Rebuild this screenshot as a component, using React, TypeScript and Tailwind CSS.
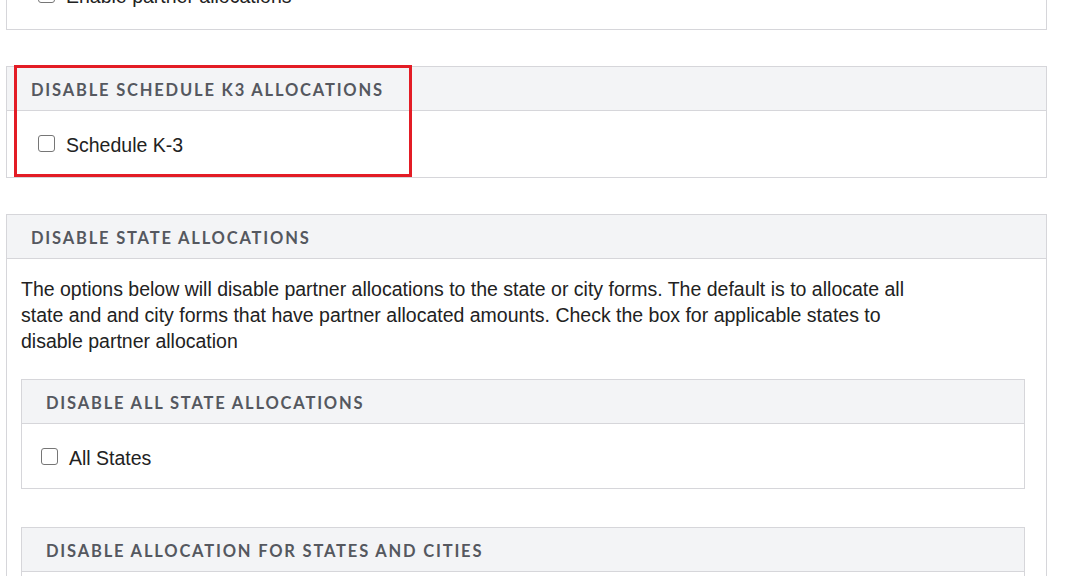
import React from 'react';

const Check: React.FC<{ label: string }> = ({ label }) => (
  <label className="flex items-start gap-[11px] text-[19.5px] leading-[26px] text-[#222]">
    <span className="mt-[3px] w-[17px] h-[17px] rounded-[3px] border border-[#767676] bg-white shrink-0" />
    {label}
  </label>
);

const Card: React.FC<{ title: string; children: React.ReactNode; className?: string }> = ({ title, children, className }) => (
  <div className={`border border-[#d6d6da] bg-white ${className ?? ''}`}>
    <div className="h-[44px] bg-[#f3f4f6] border-b border-[#d6d6da] flex items-center px-6 pt-[3px]">
      <h3 className="font-['Lato',sans-serif] font-bold text-[16.5px] tracking-[0.11em] text-[#55585f] uppercase">{title}</h3>
    </div>
    {children}
  </div>
);

export default function App() {
  return (
    <div className="w-[1072px] h-[576px] overflow-hidden bg-white font-['Liberation_Sans',Arial,sans-serif]">
      <div className="-mt-[82px] ml-[6px] w-[1041px] flex flex-col gap-[36px]">
        {/* Partner allocations */}
        <Card title="Enable partner allocations">
          <div className="h-[66px] pl-[31px] pt-[20px]">
            <Check label="Enable partner allocations" />
          </div>
        </Card>

        {/* Schedule K3 */}
        <div className="relative">
          <Card title="Disable Schedule K3 Allocations">
            <div className="h-[66px] pl-[31px] pt-[21px]">
              <Check label="Schedule K-3" />
            </div>
          </Card>
          <div className="absolute left-[8px] -top-[1px] w-[398px] h-[112px] border-[3px] border-[#e31c25] pointer-events-none" />
        </div>

        {/* State allocations */}
        <Card title="Disable State Allocations">
          <div className="pl-[14px] pr-[21px] pt-[17px] pb-[20px]">
            <p className="w-[900px] text-[19.5px] leading-[26px] text-[#222]">
              The options below will disable partner allocations to the state or city forms. The default is to allocate all state and and city forms that have partner allocated amounts. Check the box for applicable states to disable partner allocation
            </p>
            <Card title="Disable All State Allocations" className="mt-[25px]">
              <div className="h-[64px] pl-[19px] pt-[21px]">
                <Check label="All States" />
              </div>
            </Card>
            <Card title="Disable Allocation for States and Cities" className="mt-[38px]">
              <div className="h-[120px]" />
            </Card>
          </div>
        </Card>
      </div>
    </div>
  );
}
